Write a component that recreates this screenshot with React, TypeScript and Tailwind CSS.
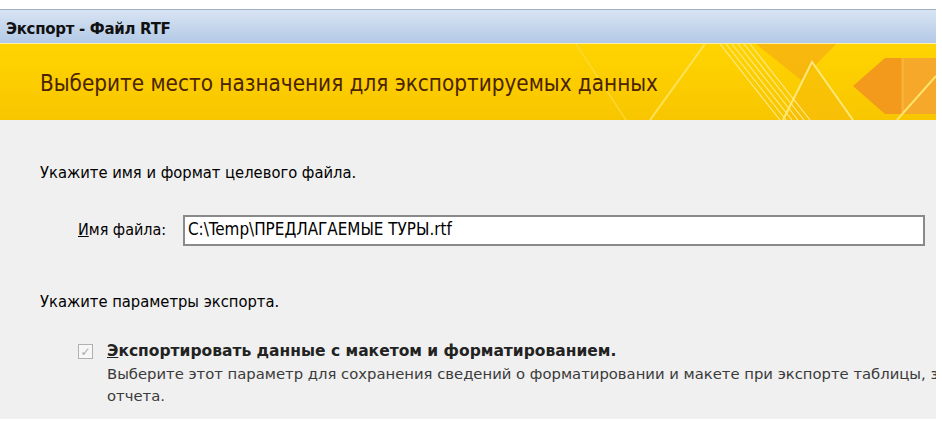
import React from 'react';

// decorative art in the right half of the yellow banner
const BannerArt: React.FC = () => (
  <svg className="absolute right-0 top-0" width="420" height="76" viewBox="0 0 420 76">
    <polygon points="240,0 320,0 285,36" fill="#f5ad12" opacity="0.7" />
    <polygon points="267,76 296,18 337,76" fill="#f6bb0a" opacity="0.6" />
    <line x1="134" y1="76" x2="189" y2="0" stroke="#ffe15a" strokeWidth="2" />
    <line x1="60" y1="0" x2="110" y2="76" stroke="#ffdc48" strokeWidth="1.5" opacity="0.7" />
    {[0, 6, 12, 18, 24, 30].map(o => (
      <line key={o} x1={204 + o} y1={0} x2={264 + o} y2={76} stroke="#ffe680" strokeWidth="1.2" />
    ))}
    <polyline points="267,76 296,18 337,76" stroke="#ffe878" strokeWidth="2" fill="none" />
    <polygon points="337,42 369,14 420,14 420,70 369,70" fill="#f39a1c" />
    <polygon points="385,14 420,14 420,70 385,70" fill="#f5a82a" />
    <line x1="387" y1="14" x2="387" y2="70" stroke="#f8b640" strokeWidth="1.5" />
    <line x1="381" y1="76" x2="420" y2="32" stroke="#ffe46a" strokeWidth="2" />
  </svg>
);

export default function App() {
  const font = { fontFamily: '"DejaVu Sans", Verdana, sans-serif' };
  const cond = { fontFamily: '"DejaVu Sans Condensed", "DejaVu Sans", Tahoma, sans-serif' };
  return (
    <div className="w-[942px] h-[424px] bg-white pt-[9px] pr-[6px] pb-[5px] overflow-hidden" style={font}>
      <div className="flex flex-col w-[936px] h-[410px] bg-[#f0f0f0] overflow-hidden">
        <div className="h-[35px] flex items-center pt-[6px] px-[6px] bg-gradient-to-b from-[#d8e4f3] to-[#b3c9e6] border-t border-[#9fb0c4] border-b border-b-[#fff2a8]">
          <span className="text-[15px] font-bold text-[#111] tracking-[-0.3px]">Экспорт - Файл RTF</span>
        </div>
        <div className="relative h-[76px] bg-gradient-to-b from-[#ffd400] to-[#f8c600] flex items-center pl-[40px] pt-[3px] overflow-hidden">
          <BannerArt />
          <span className="relative text-[22.3px] text-[#4a2300]" style={cond}>Выберите место назначения для экспортируемых данных</span>
        </div>
        <div className="flex flex-col pl-[40px] pt-[41px] text-black">
          <div className="text-[16.4px]" style={cond}>Укажите имя и формат целевого файла.</div>
          <div className="flex items-center mt-[29px] pl-[38px]" style={cond}>
            <label className="w-[105px] text-[16px]"><span className="underline">И</span>мя файла:</label>
            <div className="w-[742px] h-[31px] bg-white border-2 border-[#8a8a8a] flex items-center px-[3px] text-[16.9px]">C:\Temp\ПРЕДЛАГАЕМЫЕ ТУРЫ.rtf</div>
          </div>
          <div className="mt-[44px] text-[16.4px]" style={cond}>Укажите параметры экспорта.</div>
          <div className="flex mt-[26px] pl-[38px]">
            <div className="w-[15px] h-[15px] border border-[#b0b0b0] bg-[#f7f7f7] flex items-center justify-center text-[#a8a8a8] text-[12px] mt-[4px] shrink-0">✓</div>
            <div className="ml-[14px] flex flex-col">
              <div className="font-bold text-[15.5px] text-[#222]"><span className="underline">Э</span>кспортировать данные с макетом и форматированием.</div>
              <div className="text-[#3a3a3a] text-[14.8px] leading-[22px] whitespace-nowrap">Выберите этот параметр для сохранения сведений о форматировании и макете при экспорте таблицы, запроса, формы или</div>
              <div className="text-[#3a3a3a] text-[14.8px] leading-[22px]">отчета.</div>
            </div>
          </div>
        </div>
      </div>
    </div>
  );
}
